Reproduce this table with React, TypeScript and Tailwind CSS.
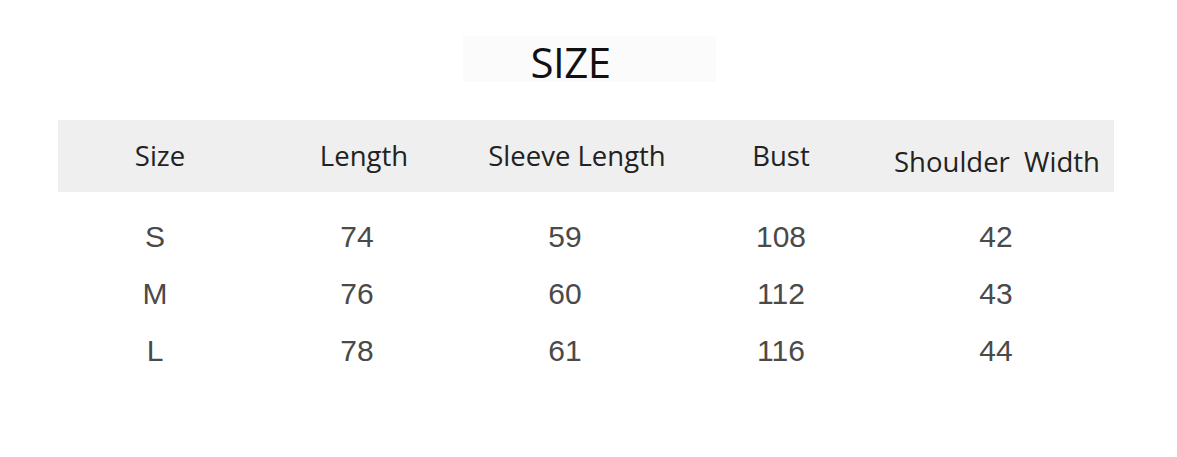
const columns = [
  { label: "Size", width: "w-[202px]", head: "pl-[2px]", body: "pr-[8px]" },
  { label: "Length", width: "w-[200px]", head: "pl-[8px]", body: "pr-[6px]" },
  { label: "Sleeve Length", width: "w-[220px]", head: "pl-[14px]", body: "pr-[10px]" },
  { label: "Bust", width: "w-[200px]", head: "pl-[2px]", body: "pl-[2px]" },
  { label: "Shoulder  Width", width: "w-[234px]", head: "pt-[12px] whitespace-pre", body: "pr-[2px]" },
];

const rows = [
  ["S", "74", "59", "108", "42"],
  ["M", "76", "60", "112", "43"],
  ["L", "78", "61", "116", "44"],
];

export default function App() {
  return (
    <div className="w-[1177px] h-[457px] bg-white overflow-hidden">
      {/* Title */}
      <div className="flex justify-center pt-[36px] pl-[2px]">
        <div className="w-[253px] h-[46px] bg-[#fbfbfb] flex items-center justify-center">
          <h1 className="text-[42px] leading-none text-[#111] font-['Open_Sans',sans-serif] tracking-[-0.5px] -ml-[38px] mt-[6px]">
            SIZE
          </h1>
        </div>
      </div>

      {/* Header band */}
      <div className="mt-[38px] ml-[58px] w-[1056px] h-[72px] bg-[#efefef] flex items-center font-['Open_Sans',sans-serif] text-[#222] text-[27.5px]">
        {columns.map((c) => (
          <div key={c.label} className={`${c.width} flex justify-center ${c.head}`}>
            {c.label}
          </div>
        ))}
      </div>

      {/* Rows */}
      <div className="ml-[58px] pt-[16px] font-['Liberation_Sans',Arial,sans-serif] text-[30px] text-[#4a4a4a]">
        {rows.map((r) => (
          <div key={r[0]} className="flex h-[57px] items-center">
            {r.map((v, i) => (
              <div key={i} className={`${columns[i].width} flex justify-center ${columns[i].body}`}>
                {v}
              </div>
            ))}
          </div>
        ))}
      </div>
    </div>
  );
}
